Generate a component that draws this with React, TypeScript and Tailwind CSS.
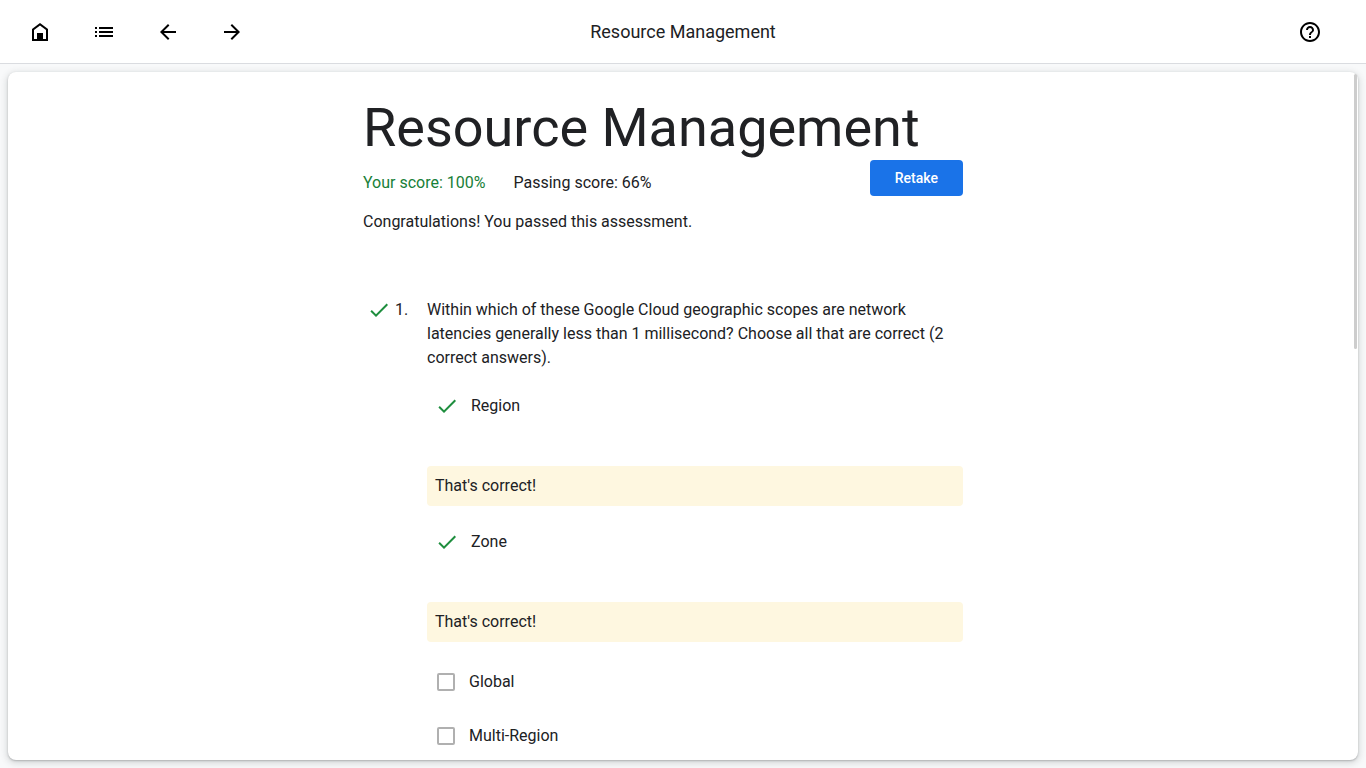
import type { ReactNode } from "react";

const question = {
  number: 1,
  text: "Within which of these Google Cloud geographic scopes are network latencies generally less than 1 millisecond? Choose all that are correct (2 correct answers).",
  correct: ["Region", "Zone"],
  others: ["Global", "Multi-Region"],
};

function Icon({ children, className = "" }: { children: ReactNode; className?: string }) {
  return (
    <svg viewBox="0 0 24 24" fill="currentColor" aria-hidden="true" className={`size-6 shrink-0 ${className}`}>
      {children}
    </svg>
  );
}

function HeaderLink({ label, children }: { label: string; children: ReactNode }) {
  return (
    <a href="#" aria-label={label} className="flex size-12 items-center justify-center rounded-full text-black">
      <Icon>{children}</Icon>
    </a>
  );
}

function CheckMark() {
  return (
    <Icon className="text-[#1e8e3e]">
      <path d="M9 16.17 4.83 12l-1.42 1.41L9 19 21 7l-1.41-1.41z" />
    </Icon>
  );
}

function Header() {
  return (
    <header className="grid h-16 shrink-0 grid-cols-[1fr_auto_1fr] items-center border-b border-[#dadce0] bg-white">
      <nav aria-label="Course" className="flex gap-4 pl-4">
        <HeaderLink label="Home">
          <path d="M12 3 4 9v12h16V9l-8-6zm6 16H6v-9l6-4.5 6 4.5v9z" />
          <path d="M9 13h6v7H9z" />
        </HeaderLink>
        <HeaderLink label="Contents">
          <path d="M3 7h2v2H3zM3 11h2v2H3zM3 15h2v2H3zM7 7h14v2H7zM7 11h14v2H7zM7 15h14v2H7z" />
        </HeaderLink>
        <HeaderLink label="Previous">
          <path d="M20 11H7.83l5.59-5.59L12 4l-8 8 8 8 1.41-1.41L7.83 13H20v-2z" />
        </HeaderLink>
        <HeaderLink label="Next">
          <path d="m12 4-1.41 1.41L16.17 11H4v2h12.17l-5.58 5.59L12 20l8-8z" />
        </HeaderLink>
      </nav>
      <div className="text-lg leading-6">Resource Management</div>
      <div className="flex justify-end pr-8">
        <HeaderLink label="Help">
          <path d="M11 18h2v-2h-2v2zm1-16C6.48 2 2 6.48 2 12s4.48 10 10 10 10-4.48 10-10S17.52 2 12 2zm0 18c-4.41 0-8-3.59-8-8s3.59-8 8-8 8 3.59 8 8-3.59 8-8 8zm0-14c-2.21 0-4 1.79-4 4h2c0-1.1.9-2 2-2s2 .9 2 2c0 2-3 1.75-3 5h2c0-2.25 3-2.5 3-5 0-2.21-1.79-4-4-4z" />
        </HeaderLink>
      </div>
    </header>
  );
}

export default function App() {
  return (
    <div className="flex h-screen flex-col bg-[#f8f9fa] font-[Roboto,sans-serif] text-base leading-6 text-[#202124]">
      <Header />
      <main className="relative m-2 min-h-0 flex-1 rounded-lg bg-white shadow-[0_1px_2px_rgba(60,64,67,0.3),0_2px_6px_2px_rgba(60,64,67,0.15)]">
        <div className="h-full overflow-y-auto rounded-lg [scrollbar-width:none]">
          <div className="mx-auto max-w-[640px] pt-6 pr-10 pb-2">
            <h1 className="text-[54px] leading-[64px] whitespace-nowrap">Resource Management</h1>
            <div className="flex items-start justify-between">
              <div className="flex gap-7 pt-[11px]">
                <span className="text-[#188038]">Your score: 100%</span>
                <span>Passing score: 66%</span>
              </div>
              <button
                type="button"
                className="h-9 rounded bg-[#1a73e8] px-[25px] text-sm font-medium text-white"
              >
                Retake
              </button>
            </div>
            <p className="mt-3.5">Congratulations! You passed this assessment.</p>

            <section className="mt-16 flex">
              <div className="flex w-16 shrink-0 items-start gap-1 pl-1">
                <CheckMark />
                <span>{question.number}.</span>
              </div>
              <div className="min-w-0 flex-1">
                <p>{question.text}</p>
                {question.correct.map((answer) => (
                  <div key={answer} className="pt-6">
                    <div className="flex items-center gap-3 pl-2">
                      <CheckMark />
                      <span>{answer}</span>
                    </div>
                    <p className="mt-12 rounded bg-[#fef7e0] p-2">That's correct!</p>
                  </div>
                ))}
                <div className="mt-7 flex flex-col gap-[30px]">
                  {question.others.map((answer) => (
                    <label key={answer} className="flex items-center gap-3.5 pl-2.5">
                      <input
                        type="checkbox"
                        disabled
                        className="size-[18px] shrink-0 appearance-none rounded-xs border-2 border-[#b0b0b0]"
                      />
                      <span>{answer}</span>
                    </label>
                  ))}
                </div>
              </div>
            </section>
          </div>
        </div>
        <div aria-hidden="true" className="absolute top-0.5 right-px h-[40%] w-[3px] rounded-full bg-[#cdcdcd]" />
      </main>
    </div>
  );
}
